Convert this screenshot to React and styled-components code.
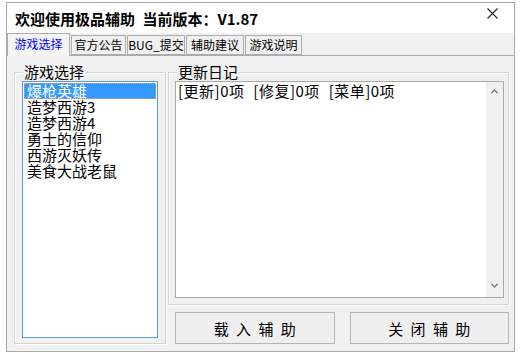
import React from "react";
import styled, { createGlobalStyle } from "styled-components";

const GlobalStyle = createGlobalStyle`
  html, body { margin: 0; padding: 0; background: #ffffff; }
  body { font-family: "Noto Sans CJK SC", "Noto Sans", sans-serif; color: #000; }
  * { box-sizing: border-box; }
`;

const Window = styled.div`
  margin: 2px 0 0 6px;
  width: 509px;
  height: 350px;
  border: 1px solid #a9a9a9;
  background: #f0f0f0;
  display: flex;
  flex-direction: column;
`;

const TitleBar = styled.div`
  height: 30px;
  background: #ffffff;
  display: flex;
  align-items: center;
  justify-content: space-between;
  padding: 0 16px 0 8px;
`;

const Title = styled.div`
  font-size: 15px;
  font-weight: 700;
  line-height: 16px;
  white-space: pre;
  word-spacing: 4px;
  margin-top: 2px;
`;

const CloseBtn = styled.div`
  align-self: flex-start;
  margin-top: 5px;
  width: 11px;
  height: 11px;
  display: flex;
`;

const TabStrip = styled.div`
  height: 22px;
  display: flex;
  align-items: flex-end;
  gap: 1px;
  position: relative;
  z-index: 1;
`;

const Tab = styled.div`
  width: ${(p) => p.$w}px;
  height: ${(p) => (p.$active ? 23 : 20)}px;
  margin-bottom: ${(p) => (p.$active ? -1 : 0)}px;
  border: 1px solid #acacac;
  border-bottom: ${(p) => (p.$active ? "none" : "1px solid #acacac")};
  background: ${(p) => (p.$active ? "#f4f4f4" : "#f0f0f0")};
  color: ${(p) => (p.$active ? "#0000ff" : "#000")};
  font-size: 12px;
  line-height: 14px;
  display: flex;
  align-items: center;
  justify-content: center;
  padding-bottom: ${(p) => (p.$active ? 2 : 0)}px;
  white-space: nowrap;
`;

const Panel = styled.div`
  flex: 1;
  border-top: 1px solid #a4acb5;
  display: grid;
  grid-template-columns: 152px 341px;
  grid-template-rows: 233px auto;
  column-gap: 2px;
  padding: 16px 0 0 7px;
  align-content: start;
`;

const Group = styled.div`
  position: relative;
  border: 1px solid #d5d5d5;
  box-shadow: 1px 1px 0 #ffffff, inset 1px 1px 0 #ffffff;
  padding: ${(p) => p.$pad};
  grid-row: ${(p) => p.$row};
  height: ${(p) => p.$h}px;
`;

const GroupLabel = styled.div`
  position: absolute;
  top: -9px;
  left: 8px;
  padding: 0 1px;
  background: #f0f0f0;
  font-size: 15px;
  line-height: 16px;
`;

const ListBox = styled.div`
  width: 136px;
  height: 257px;
  border: 1px solid #569de5;
  background: #ffffff;
  padding: 1px;
  display: flex;
  flex-direction: column;
`;

const ListItem = styled.div`
  height: 16px;
  font-size: 15px;
  line-height: 16px;
  padding-left: 3px;
  white-space: nowrap;
  background: ${(p) => (p.$sel ? "#3399ff" : "transparent")};
  color: ${(p) => (p.$sel ? "#ffffff" : "#000")};
  outline: ${(p) => (p.$sel ? "1px dotted #f5a050" : "none")};
  outline-offset: -1px;
`;

const TextArea = styled.div`
  width: 329px;
  height: 217px;
  border: 1px solid #a9a9a9;
  background: #ffffff;
  display: flex;
`;

const TextContent = styled.div`
  flex: 1;
  padding: 1px 2px;
  font-size: 15px;
  line-height: 16px;
  white-space: pre;
  word-spacing: 5px;
  letter-spacing: 0.5px;
`;

const ScrollBar = styled.div`
  width: 17px;
  background: #f0f0f0;
  display: flex;
  flex-direction: column;
  justify-content: space-between;
  align-items: center;
  padding: 7px 0 9px;
`;

const ButtonRow = styled.div`
  grid-column: 2;
  grid-row: 2;
  display: flex;
  gap: 15px;
  padding-left: 7px;
  margin-top: 7px;
`;

const Button = styled.div`
  width: 160px;
  height: 32px;
  border: 1px solid #b5b5b5;
  background: #efefef;
  font-size: 15px;
  display: flex;
  align-items: center;
  justify-content: center;
  white-space: pre;
  word-spacing: 4px;
`;

const Chevron = ({ up }) => (
  <svg width="7" height="5" viewBox="0 0 7 5">
    <polyline
      points={up ? "0.5,4 3.5,1 6.5,4" : "0.5,1 3.5,4 6.5,1"}
      fill="none"
      stroke="#7a7a7a"
      strokeWidth="1.4"
    />
  </svg>
);

const tabs = [
  { t: "游戏选择", w: 63, a: true },
  { t: "官方公告", w: 55 },
  { t: "BUG_提交", w: 58 },
  { t: "辅助建议", w: 58 },
  { t: "游戏说明", w: 57 },
];

const games = ["爆枪英雄", "造梦西游3", "造梦西游4", "勇士的信仰", "西游灭妖传", "美食大战老鼠"];

export default function App() {
  return (
    <>
      <GlobalStyle />
      <Window>
        <TitleBar>
          <Title>欢迎使用极品辅助 当前版本：V1.87</Title>
          <CloseBtn>
            <svg width="11" height="11" viewBox="0 0 11 11">
              <path d="M0.5 0.5 L10.5 10.5 M10.5 0.5 L0.5 10.5" stroke="#222" strokeWidth="1.1" fill="none" />
            </svg>
          </CloseBtn>
        </TitleBar>
        <TabStrip>
          {tabs.map((t) => (
            <Tab key={t.t} $w={t.w} $active={t.a}>
              {t.t}
            </Tab>
          ))}
        </TabStrip>
        <Panel>
          <Group $row="1 / 3" $h={272} $pad="8px 7px">
            <GroupLabel>游戏选择</GroupLabel>
            <ListBox>
              {games.map((g, i) => (
                <ListItem key={g} $sel={i === 0}>
                  {g}
                </ListItem>
              ))}
            </ListBox>
          </Group>
          <Group $row="1" $h={233} $pad="8px 6px">
            <GroupLabel>更新日记</GroupLabel>
            <TextArea>
              <TextContent>[更新]0项 [修复]0项 [菜单]0项</TextContent>
              <ScrollBar>
                <Chevron up />
                <Chevron />
              </ScrollBar>
            </TextArea>
          </Group>
          <ButtonRow>
            <Button>载 入 辅 助</Button>
            <Button>关 闭 辅 助</Button>
          </ButtonRow>
        </Panel>
      </Window>
    </>
  );
}
